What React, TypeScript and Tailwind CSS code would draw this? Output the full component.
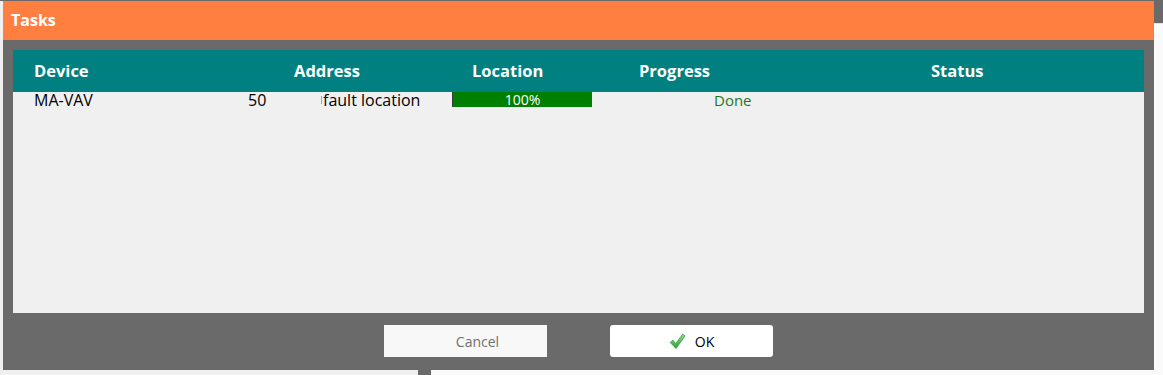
import React from "react";

const font = { fontFamily: '"Open Sans", "Noto Sans", sans-serif' };

function CheckIcon() {
  return (
    <svg width="17" height="17" viewBox="0 0 17 17" className="mr-[9px]">
      <defs>
        <linearGradient id="chk" x1="0" y1="0" x2="0" y2="1">
          <stop offset="0" stopColor="#8fe08a" />
          <stop offset="1" stopColor="#2f9e35" />
        </linearGradient>
      </defs>
      <path
        d="M1.2 9.4 L4 7.2 L6.6 10.6 L13.8 1.2 L16 3 L7 15.6 Z"
        fill="url(#chk)"
        stroke="#3a9a3a"
        strokeWidth="0.8"
        strokeLinejoin="round"
      />
    </svg>
  );
}

export default function App() {
  return (
    <div className="w-[1163px] h-[375px] bg-[#f0f0f0] flex flex-col overflow-hidden" style={font}>
      <div className="h-px bg-[#6a6a6a] shrink-0" />
      <div className="flex shrink-0">
        <div className="w-[3px]" />
        <div className="w-[1151px] flex flex-col">
          <div className="h-[39px] bg-[#ff7f41] flex items-center pl-[8px] pb-[1px]">
            <span className="text-white font-bold text-[16px]">Tasks</span>
          </div>
          <div className="h-[330px] bg-[#6a6a6a] flex flex-col px-[10px] pt-[10px]">
            <div className="h-[42px] bg-[#008080] flex items-center pl-[21px] text-white font-bold text-[16.5px]">
              <div className="w-[260px]">Device</div>
              <div className="w-[178px]">Address</div>
              <div className="w-[167px]">Location</div>
              <div className="w-[292px]">Progress</div>
              <div>Status</div>
            </div>
            <div className="h-[221px] bg-[#f0f0f0]">
              <div className="h-[16px] flex items-center text-[16px] text-black">
                <div className="w-[235px] pl-[21px]">MA-VAV</div>
                <div className="w-[73px]">50</div>
                <div className="w-[131px] flex items-center">
                  <span className="w-px h-[8px] bg-[#4fc8e8] mr-px" />
                  fault location
                </div>
                <div className="w-[140px] h-[15px] self-start bg-[#008000] border-l border-[#3a3a3a] flex items-center justify-center text-white text-[14px] leading-none">
                  100%
                </div>
                <div className="w-[122px]" />
                <div className="text-[#1a7a1a] text-[15px]">Done</div>
              </div>
            </div>
            <div className="flex-1 flex justify-center items-start pt-[12px] gap-[63px]">
              <button className="w-[163px] h-[32px] bg-[#f8f8f8] text-[#707070] text-[14px] flex items-center justify-center pl-[24px]">
                Cancel
              </button>
              <button className="w-[163px] h-[32px] bg-white rounded-[3px] text-black text-[14px] flex items-center justify-center">
                <CheckIcon />
                OK
              </button>
            </div>
          </div>
        </div>
        <div className="flex-1 flex flex-col">
          <div className="h-[22px] bg-[#6a6a6a]" />
          <div className="h-px bg-[#e4e4e4]" />
          <div className="flex-1 bg-[#fafafa]" />
        </div>
      </div>
      <div className="flex-1 flex">
        <div className="w-[418px]" />
        <div className="w-[13px] bg-[#6a6a6a]" />
        <div className="flex-1 bg-[#fafafa]" />
      </div>
    </div>
  );
}
